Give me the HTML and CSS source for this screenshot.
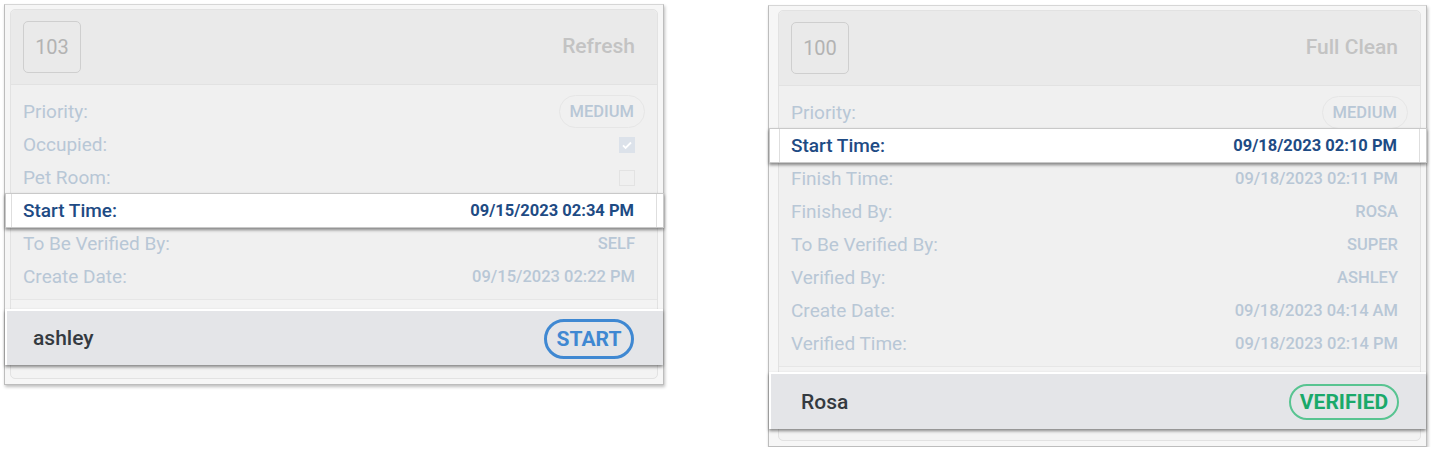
FILE: index.html
```html
<!DOCTYPE html>
<html>
<head>
<meta charset="utf-8">
<link rel="stylesheet" href="styles.css">
</head>
<body>
<div class="page">
  <div class="frame frame-left">
    <div class="card">
      <div class="card-head">
        <div class="room">103</div>
        <div class="type">Refresh</div>
      </div>
      <div class="card-body">
        <div class="row"><span class="lbl">Priority:</span><span class="pill">MEDIUM</span></div>
        <div class="row"><span class="lbl">Occupied:</span><span class="chk on"><svg viewBox="0 0 16 16" width="16" height="16"><path d="M4 8.3l2.6 2.6L12 5.5" fill="none" stroke="#fff" stroke-width="1.8"/></svg></span></div>
        <div class="row"><span class="lbl">Pet Room:</span><span class="chk"></span></div>
        <div class="row hl"><span class="lbl">Start Time:</span><span class="val">09/15/2023 02:34 PM</span></div>
        <div class="row"><span class="lbl">To Be Verified By:</span><span class="val">SELF</span></div>
        <div class="row"><span class="lbl">Create Date:</span><span class="val">09/15/2023 02:22 PM</span></div>
      </div>
      <div class="card-foot">
        <div class="foot">
          <span class="who">ashley</span>
          <span class="btn btn-start">START</span>
        </div>
      </div>
    </div>
  </div>

  <div class="frame frame-right">
    <div class="card">
      <div class="card-head">
        <div class="room">100</div>
        <div class="type">Full Clean</div>
      </div>
      <div class="card-body">
        <div class="row"><span class="lbl">Priority:</span><span class="pill">MEDIUM</span></div>
        <div class="row hl"><span class="lbl">Start Time:</span><span class="val">09/18/2023 02:10 PM</span></div>
        <div class="row"><span class="lbl">Finish Time:</span><span class="val">09/18/2023 02:11 PM</span></div>
        <div class="row"><span class="lbl">Finished By:</span><span class="val">ROSA</span></div>
        <div class="row"><span class="lbl">To Be Verified By:</span><span class="val">SUPER</span></div>
        <div class="row"><span class="lbl">Verified By:</span><span class="val">ASHLEY</span></div>
        <div class="row"><span class="lbl">Create Date:</span><span class="val">09/18/2023 04:14 AM</span></div>
        <div class="row"><span class="lbl">Verified Time:</span><span class="val">09/18/2023 02:14 PM</span></div>
      </div>
      <div class="card-foot">
        <div class="foot">
          <span class="who">Rosa</span>
          <span class="btn btn-verified">VERIFIED</span>
        </div>
      </div>
    </div>
  </div>
</div>
</body>
</html>
```

FILE: styles.css
```css
* { box-sizing: border-box; }
html, body { margin: 0; padding: 0; background: #fff; }
body { font-family: Roboto, "Liberation Sans", sans-serif; }

.page {
  display: flex;
  align-items: flex-start;
  gap: 104px;
  padding: 4px 0 0 4px;
}

.frame {
  --pl: 5px;
  --fpt: 9px;
  background: #f6f6f6;
  border: 1px solid #bdbdbd;
  border-top-color: #d6d6d6;
  box-shadow: 1px 2px 3px rgba(0,0,0,0.25);
  padding: 4px 5px 5px var(--pl);
}
.frame-left { width: 660px; }
.frame-right { width: 659px; margin-top: 1px; --pl: 9px; --fpt: 5px; }

.card {
  background: #f0f0f0;
  border: 1px solid #e2e2e2;
  border-radius: 5px;
}

.card-head {
  height: 75px;
  background: #eaeaea;
  border-bottom: 1px solid #e2e2e2;
  border-radius: 5px 5px 0 0;
  display: flex;
  align-items: center;
  justify-content: space-between;
  padding: 0 22px 0 12px;
}
.room {
  width: 58px;
  height: 52px;
  border: 1px solid #cfcfcf;
  border-radius: 5px;
  display: flex;
  align-items: center;
  justify-content: center;
  font-size: 20px;
  color: #b3b3b3;
}
.type {
  font-size: 21px;
  font-weight: 500;
  color: #c3c3c3;
  padding-bottom: 2px;
}

.card-body {
  padding: 10px 22px 6px 12px;
  border-bottom: 1px solid #e6e6e6;
}
.row {
  height: 33px;
  display: flex;
  align-items: center;
  justify-content: space-between;
}
.lbl {
  font-size: 19px;
  color: #b8c7d6;
}
.val {
  font-size: 16.5px;
  font-weight: 500;
  color: #b8c7d6;
}
.pill {
  height: 33px;
  padding: 0 10px;
  margin-right: -10px;
  border: 1px solid #e6e6e6;
  border-radius: 17px;
  display: flex;
  align-items: center;
  font-size: 16.5px;
  font-weight: 500;
  color: #b8c7d6;
}
.chk {
  width: 16px;
  height: 16px;
  border: 1px solid #e3e3e3;
  display: block;
}
.chk.on {
  background: #dce2ea;
  border-color: #dce2ea;
}
.chk.on svg { display: block; margin: -1px; }

.row.hl {
  height: 35px;
  margin: -1px -29px -1px calc(-13px - var(--pl));
  padding: 0 29px 0 calc(13px + var(--pl) - 1px);
  background:
    linear-gradient(to right, transparent calc(var(--pl) + 0px), #dedede calc(var(--pl) + 0px), #dedede calc(var(--pl) + 1px), transparent calc(var(--pl) + 1px)),
    linear-gradient(to left, transparent 6px, #dedede 6px, #dedede 7px, transparent 7px),
    #fff;
  border: 1px solid #c9c9c9;
  box-shadow: 0 2px 3px rgba(0,0,0,0.45);
  position: relative;
}
.row.hl .lbl { color: #1e4b84; font-weight: 500; }
.row.hl .val { color: #1e4b84; font-weight: 700; }

.card-foot {
  background: #f3f3f3;
  padding: var(--fpt) 0 13px;
  border-radius: 0 0 5px 5px;
}
.frame-right .card-foot { padding-bottom: 11px; }
.foot {
  height: 56px;
  margin: 0 -6px 0 calc(-1px - var(--pl));
  padding: 0 29px 0 calc(26px + var(--pl) - 5px);
  background: #e4e5e8;
  border-top: 2px solid #fff;
  border-left: 2px solid #fff;
  box-shadow: 0 2px 3px rgba(0,0,0,0.45);
  display: flex;
  align-items: center;
  justify-content: space-between;
}
.frame-right .foot { height: 57px; padding-right: 27px; }
.who {
  font-size: 21px;
  font-weight: 500;
  color: #343a40;
}
.btn {
  border-radius: 20px;
  font-weight: 700;
  display: flex;
  align-items: center;
  justify-content: center;
}
.btn-start {
  width: 90px;
  height: 40px;
  border: 3px solid #3f88d2;
  color: #3f88d2;
  font-size: 21px;
  margin-top: 2px;
}
.btn-verified {
  width: 110px;
  height: 36px;
  border: 2px solid #58c491;
  color: #1aa96a;
  font-size: 21px;
}
```
